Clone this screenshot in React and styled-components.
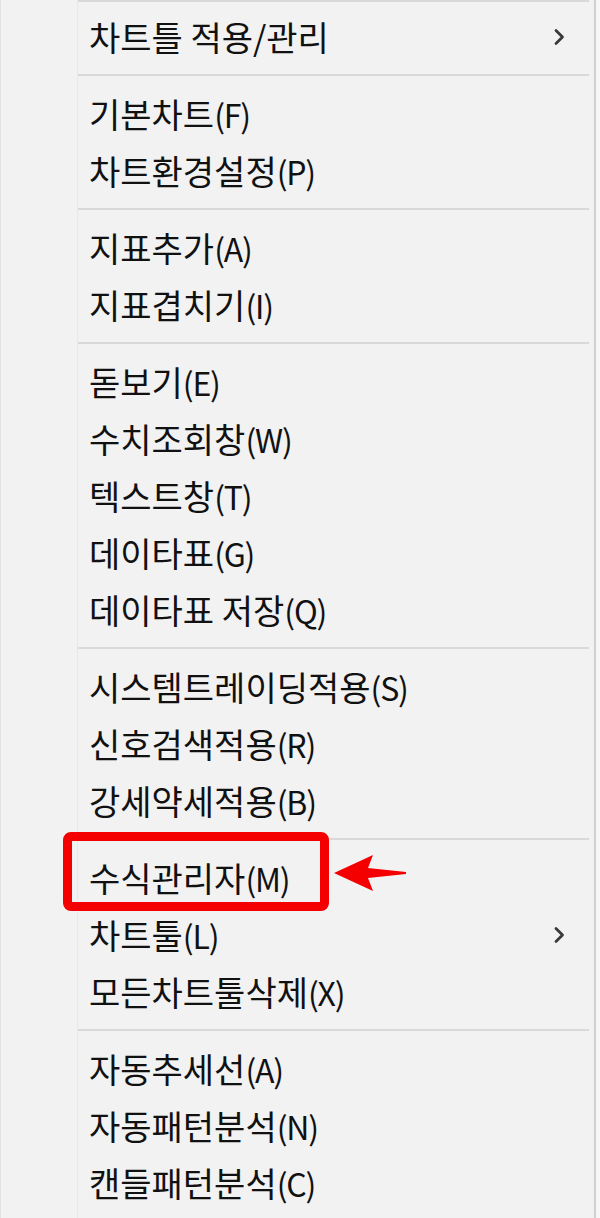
import React from "react";
import styled, { createGlobalStyle } from "styled-components";

const GlobalStyle = createGlobalStyle`
  html, body {
    margin: 0;
    padding: 0;
    background: #f2f2f2;
  }
  * {
    box-sizing: border-box;
  }
`;

const Page = styled.div`
  display: flex;
  width: 600px;
  height: 1218px;
  overflow: hidden;
  background: #f7f7f7;
`;

// menu body, with the faint icon gutter line drawn in the background
const Menu = styled.div`
  position: relative;
  display: flex;
  flex-direction: column;
  width: 596px;
  height: 100%;
  background: linear-gradient(
    to right,
    #f2f2f2 0 76px,
    #e8e8e8 76px 77px,
    #f2f2f2 77px
  );
  border-left: 1px solid #e2e2e2;
  border-right: 2px solid #d0d0d0;
  font-family: "Noto Sans CJK KR", "Noto Sans", sans-serif;
`;

const Item = styled.div`
  display: flex;
  align-items: center;
  justify-content: space-between;
  height: 57px;
  padding: 0 28px 0 88px;
  font-size: 34px;
  font-weight: 400;
  color: #111;
  white-space: nowrap;
`;

const Shortcut = styled.span`
  font-size: 32px;
  letter-spacing: -1.2px;
`;

const Divider = styled.div`
  height: 2px;
  margin: ${(p) => (p.$first ? "0 5px 6px 77px" : "9px 5px 9px 77px")};
  background: #d9d9d9;
`;

const Chevron = () => (
  <svg width="14" height="20" viewBox="0 0 14 20">
    <path
      d="M4 3.5 L10.5 10 L4 16.5"
      fill="none"
      stroke="#3a3a3a"
      strokeWidth="2.8"
      strokeLinecap="round"
      strokeLinejoin="round"
    />
  </svg>
);

const Highlight = styled.div`
  position: absolute;
  left: 62px;
  top: 832px;
  width: 266px;
  height: 79px;
  border: 9px solid #f40000;
  border-radius: 8px;
`;

const Pointer = styled.svg`
  position: absolute;
  left: 330px;
  top: 850px;
`;

const groups = [
  [{ label: "차트틀 적용/관리", sub: true }],
  [
    { label: "기본차트", key: "(F)" },
    { label: "차트환경설정", key: "(P)" },
  ],
  [
    { label: "지표추가", key: "(A)" },
    { label: "지표겹치기", key: "(I)" },
  ],
  [
    { label: "돋보기", key: "(E)" },
    { label: "수치조회창", key: "(W)" },
    { label: "텍스트창", key: "(T)" },
    { label: "데이타표", key: "(G)" },
    { label: "데이타표 저장", key: "(Q)" },
  ],
  [
    { label: "시스템트레이딩적용", key: "(S)" },
    { label: "신호검색적용", key: "(R)" },
    { label: "강세약세적용", key: "(B)" },
  ],
  [
    { label: "수식관리자", key: "(M)" },
    { label: "차트툴", key: "(L)", sub: true },
    { label: "모든차트툴삭제", key: "(X)" },
  ],
  [
    { label: "자동추세선", key: "(A)" },
    { label: "자동패턴분석", key: "(N)" },
    { label: "캔들패턴분석", key: "(C)" },
  ],
];

const App = () => {
  return (
    <>
      <GlobalStyle />
      <Page>
        <Menu>
          {groups.map((group, gi) => (
            <React.Fragment key={gi}>
              <Divider $first={gi === 0} />
              {group.map((item) => (
                <Item key={item.label}>
                  <span>
                    {item.label}
                    {item.key ? <Shortcut>{item.key}</Shortcut> : null}
                  </span>
                  {item.sub ? <Chevron /> : null}
                </Item>
              ))}
            </React.Fragment>
          ))}
          <Highlight />
          <Pointer width="80" height="46" viewBox="0 0 80 46">
            <polygon
              points="3,23 42,5 37,18 75,22 75,24 37,28 42,41"
              fill="#f40000"
            />
          </Pointer>
        </Menu>
      </Page>
    </>
  );
};

export default App;
